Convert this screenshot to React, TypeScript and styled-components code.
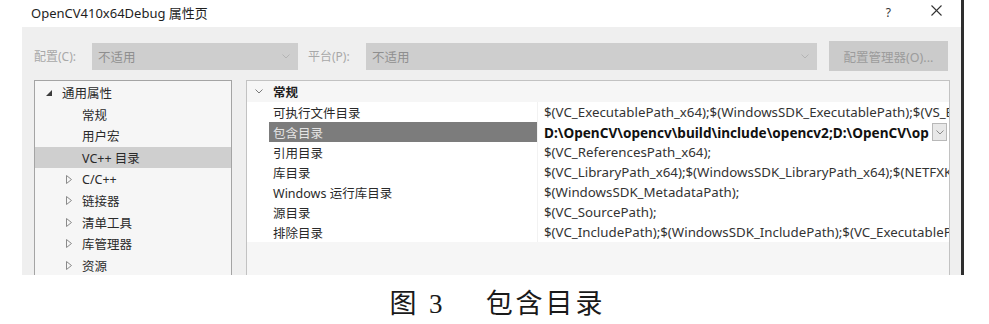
import React from 'react';
import styled, { createGlobalStyle } from 'styled-components';

const uiFont = `"Noto Sans", "Noto Sans CJK SC", sans-serif`;

interface TreeItem {
  label: string;
  level: number;
  expander?: 'open' | 'closed';
  selected?: boolean;
}

interface PropRow {
  name: string;
  value: string;
  selected?: boolean;
}

const treeItems: TreeItem[] = [
  { label: '通用属性', level: 0, expander: 'open' },
  { label: '常规', level: 1 },
  { label: '用户宏', level: 1 },
  { label: 'VC++ 目录', level: 1, selected: true },
  { label: 'C/C++', level: 1, expander: 'closed' },
  { label: '链接器', level: 1, expander: 'closed' },
  { label: '清单工具', level: 1, expander: 'closed' },
  { label: '库管理器', level: 1, expander: 'closed' },
  { label: '资源', level: 1, expander: 'closed' },
];

const propRows: PropRow[] = [
  { name: '可执行文件目录', value: '$(VC_ExecutablePath_x64);$(WindowsSDK_ExecutablePath);$(VS_E' },
  { name: '包含目录', value: 'D:\\OpenCV\\opencv\\build\\include\\opencv2;D:\\OpenCV\\op', selected: true },
  { name: '引用目录', value: '$(VC_ReferencesPath_x64);' },
  { name: '库目录', value: '$(VC_LibraryPath_x64);$(WindowsSDK_LibraryPath_x64);$(NETFXK' },
  { name: 'Windows 运行库目录', value: '$(WindowsSDK_MetadataPath);' },
  { name: '源目录', value: '$(VC_SourcePath);' },
  { name: '排除目录', value: '$(VC_IncludePath);$(WindowsSDK_IncludePath);$(VC_ExecutableP' },
];

const Chevron = ({ color = '#999' }: { color?: string }) => (
  <svg width="8" height="5" viewBox="0 0 8 5">
    <polyline points="0.5,0.5 4,4 7.5,0.5" fill="none" stroke={color} strokeWidth="1" />
  </svg>
);

const Expander = ({ kind }: { kind?: 'open' | 'closed' }) => {
  if (kind === 'open') {
    return (
      <svg width="6" height="6" viewBox="0 0 6 6">
        <polygon points="6,0 6,6 0,6" fill="#3c3c3c" />
      </svg>
    );
  }
  if (kind === 'closed') {
    return (
      <svg width="6" height="9" viewBox="0 0 6 9">
        <polygon points="0.5,0.5 5.5,4.5 0.5,8.5" fill="none" stroke="#8a8a8a" strokeWidth="1" />
      </svg>
    );
  }
  return null;
};

const App = () => {
  return (
    <Page>
      <GlobalStyle />
      <Window>
        <TitleBar>
          <Title>OpenCV410x64Debug 属性页</Title>
          <Help>?</Help>
          <CloseIcon width="11" height="11" viewBox="0 0 11 11">
            <line x1="0.5" y1="0.5" x2="10.5" y2="10.5" stroke="#333" strokeWidth="1.1" />
            <line x1="10.5" y1="0.5" x2="0.5" y2="10.5" stroke="#333" strokeWidth="1.1" />
          </CloseIcon>
        </TitleBar>
        <Body>
          <Toolbar>
            <Label>配置(C):</Label>
            <Combo width={206}>
              <span>不适用</span>
              <Chevron color="#b4b4b4" />
            </Combo>
            <Label style={{ marginLeft: 10 }}>平台(P):</Label>
            <Combo width={451}>
              <span>不适用</span>
              <Chevron color="#b4b4b4" />
            </Combo>
            <ManagerButton>配置管理器(O)...</ManagerButton>
          </Toolbar>
          <Panels>
            <Tree>
              {treeItems.map((item) => (
                <TreeRow key={item.label} level={item.level} selected={item.selected}>
                  <ExpanderBox>
                    <Expander kind={item.expander} />
                  </ExpanderBox>
                  <span>{item.label}</span>
                </TreeRow>
              ))}
            </Tree>
            <Grid>
              <CategoryRow>
                <Gutter>
                  <Chevron color="#7a7a7a" />
                </Gutter>
                <CategoryName>常规</CategoryName>
              </CategoryRow>
              {propRows.map((row) => (
                <Row key={row.name}>
                  <Gutter />
                  <NameCell selected={row.selected}>{row.name}</NameCell>
                  <ValueCell>
                    <ValueText selected={row.selected}>{row.value}</ValueText>
                    {row.selected && (
                      <DropButton>
                        <Chevron color="#8a8a8a" />
                      </DropButton>
                    )}
                  </ValueCell>
                </Row>
              ))}
            </Grid>
          </Panels>
        </Body>
      </Window>
      <Caption>
        <span>图 3</span>
        <span>包含目录</span>
      </Caption>
    </Page>
  );
};

export default App;

const GlobalStyle = createGlobalStyle`
  html, body {
    margin: 0;
    padding: 0;
    background: #ffffff;
  }
`;

const Page = styled.div`
  width: 989px;
  height: 324px;
  display: flex;
  flex-direction: column;
  overflow: hidden;
  background: #ffffff;
  font-family: ${uiFont};
`;

const Window = styled.div`
  width: 961px;
  height: 275px;
  display: flex;
  flex-direction: column;
  border-right: 3px solid #2e2e2e;
`;

const TitleBar = styled.div`
  height: 27px;
  display: flex;
  align-items: center;
  padding-left: 31px;
  padding-right: 19px;
  background: #ffffff;
`;

const Title = styled.span`
  flex: 1;
  font-size: 13px;
  color: #1e1e1e;
  margin-top: -2px;
`;

const Help = styled.span`
  font-size: 12px;
  color: #333;
  margin-right: 40px;
  margin-top: -3px;
`;

const CloseIcon = styled.svg`
  margin-top: -6px;
`;

const Body = styled.div`
  flex: 1;
  margin-left: 22px;
  background: #efefef;
  display: flex;
  flex-direction: column;
  padding: 14px 11px 0 12px;
  min-height: 0;
`;

const Toolbar = styled.div`
  height: 30px;
  display: flex;
  align-items: center;
`;

const Label = styled.span`
  width: 58px;
  font-size: 12px;
  color: #a8a8a8;
`;

const Combo = styled.div<{ width: number }>`
  width: ${(p) => p.width}px;
  height: 27px;
  box-sizing: border-box;
  background: #cecece;
  display: flex;
  align-items: center;
  justify-content: space-between;
  padding: 0 8px 0 6px;
  font-size: 12.5px;
  color: #8e8e8e;
`;

const ManagerButton = styled.div`
  margin-left: 12px;
  width: 119px;
  height: 30px;
  background: #cbcbcb;
  display: flex;
  align-items: center;
  justify-content: center;
  font-size: 12.5px;
  color: #9c9c9c;
`;

const Panels = styled.div`
  flex: 1;
  margin-top: 9px;
  display: flex;
  gap: 14px;
  min-height: 0;
`;

const Tree = styled.div`
  width: 198px;
  box-sizing: border-box;
  border: 1px solid #a4a4a4;
  border-bottom: none;
  background: #f6f6f6;
  padding-top: 1px;
  overflow: hidden;
`;

const TreeRow = styled.div<{ level: number; selected?: boolean }>`
  height: 21.6px;
  display: flex;
  align-items: center;
  padding-left: ${(p) => (p.level === 0 ? 10 : 30)}px;
  font-size: 12.5px;
  color: #2a2a2a;
  background: ${(p) => (p.selected ? '#cfcfcf' : 'transparent')};
  white-space: nowrap;
`;

const ExpanderBox = styled.span`
  width: 16px;
  display: flex;
  align-items: center;
  padding-left: 1px;
`;

const Grid = styled.div`
  flex: 1;
  box-sizing: border-box;
  border: 1px solid #c2c2c2;
  border-bottom: none;
  background: #f6f6f6;
  overflow: hidden;
`;

const CategoryRow = styled.div`
  height: 21px;
  display: flex;
  align-items: center;
`;

const Gutter = styled.div`
  width: 22px;
  flex-shrink: 0;
  display: flex;
  align-items: center;
  justify-content: center;
  padding-left: 2px;
  box-sizing: border-box;
`;

const CategoryName = styled.span`
  padding-left: 4px;
  font-size: 12.5px;
  font-weight: 700;
  color: #1e1e1e;
`;

const Row = styled.div`
  height: 20px;
  display: flex;
  background: #ffffff;
`;

const NameCell = styled.div<{ selected?: boolean }>`
  width: 269px;
  flex-shrink: 0;
  box-sizing: border-box;
  padding-left: 4px;
  display: flex;
  align-items: center;
  font-size: 12.5px;
  color: ${(p) => (p.selected ? '#e4e4e4' : '#2a2a2a')};
  background: ${(p) => (p.selected ? '#7c7c7c' : '#ffffff')};
  border-right: 1px solid #f2f2f2;
  white-space: nowrap;
`;

const ValueCell = styled.div`
  flex: 1;
  min-width: 0;
  display: flex;
  align-items: center;
  padding-left: 6px;
`;

const ValueText = styled.span<{ selected?: boolean }>`
  flex: 1;
  min-width: 0;
  overflow: hidden;
  white-space: nowrap;
  font-size: ${(p) => (p.selected ? 13.6 : 13.3)}px;
  font-weight: ${(p) => (p.selected ? 700 : 400)};
  color: ${(p) => (p.selected ? '#111' : '#333')};
`;

const DropButton = styled.div`
  width: 15px;
  height: 18px;
  box-sizing: border-box;
  border: 1px solid #b8b8b8;
  background: #e8e8e8;
  display: flex;
  align-items: center;
  justify-content: center;
  margin-right: 2px;
  flex-shrink: 0;
`;

const Caption = styled.div`
  flex: 1;
  display: flex;
  justify-content: center;
  align-items: center;
  gap: 40px;
  padding-top: 4px;
  padding-left: 6px;
  font-family: "Liberation Serif", "Noto Sans CJK SC", serif;
  font-size: 27px;
  color: #1a1a1a;
  letter-spacing: 3px;
`;
